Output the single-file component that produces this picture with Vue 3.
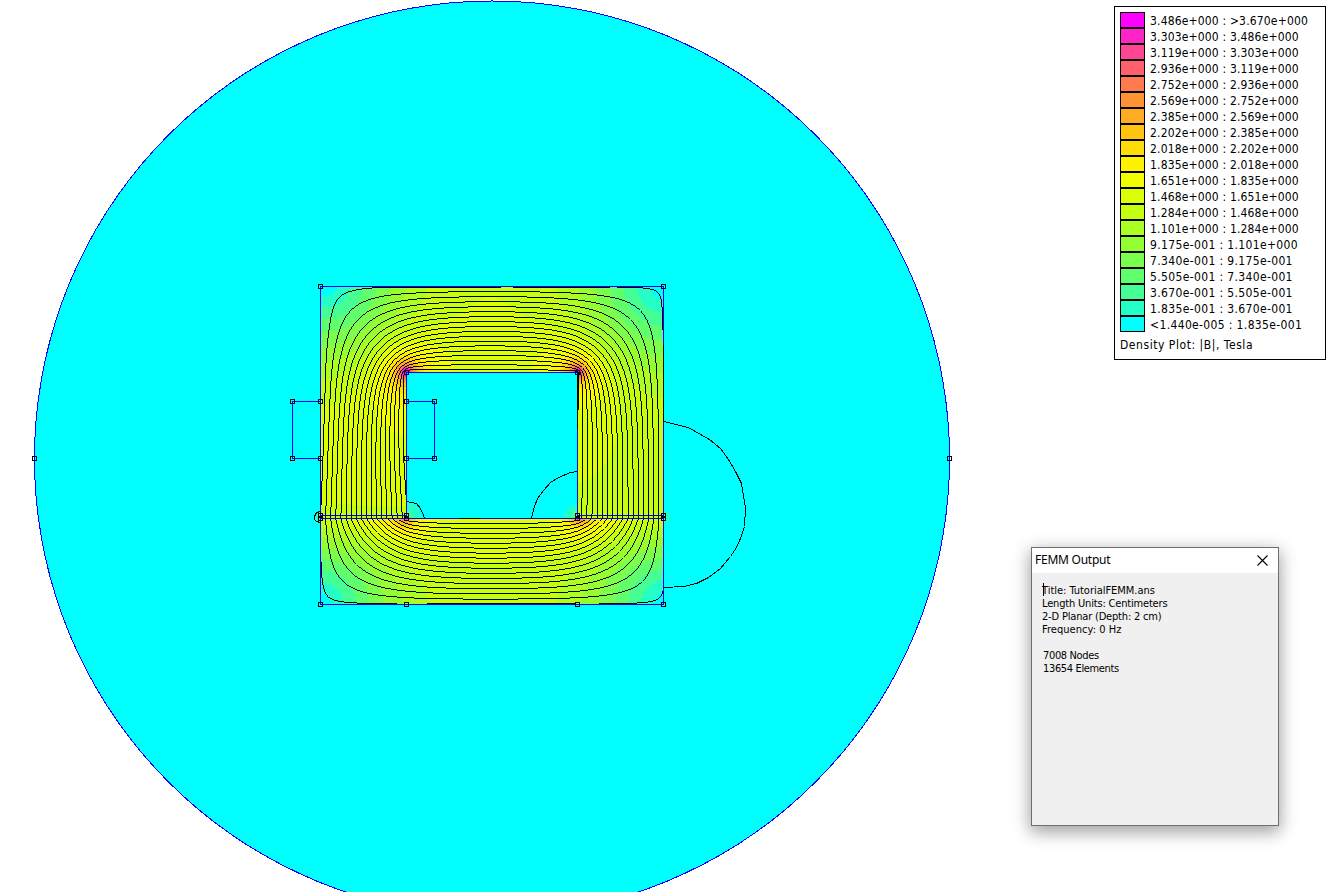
<script setup>
const palette = [
  '#00ffff', '#24ffc8', '#46ff94', '#60ff6c', '#7aff4c', '#93ff33', '#acff22', '#c4ff11', '#dbff07', '#f2ff00',
  '#fff200', '#ffdb07', '#ffc411', '#ffac22', '#ff9333', '#ff7a4c', '#ff606c', '#ff4694', '#ff24c8', '#ff00ff'
]
const ranges = [
  '3.486e+000 : >3.670e+000', '3.303e+000 : 3.486e+000', '3.119e+000 : 3.303e+000', '2.936e+000 : 3.119e+000',
  '2.752e+000 : 2.936e+000', '2.569e+000 : 2.752e+000', '2.385e+000 : 2.569e+000', '2.202e+000 : 2.385e+000',
  '2.018e+000 : 2.202e+000', '1.835e+000 : 2.018e+000', '1.651e+000 : 1.835e+000', '1.468e+000 : 1.651e+000',
  '1.284e+000 : 1.468e+000', '1.101e+000 : 1.284e+000', '9.175e-001 : 1.101e+000', '7.340e-001 : 9.175e-001',
  '5.505e-001 : 7.340e-001', '3.670e-001 : 5.505e-001', '1.835e-001 : 3.670e-001', '<1.440e-005 : 1.835e-001'
]
const legend = ranges.map((label, i) => ({ label, color: palette[19 - i], minus: label.includes('-') }))

// Core geometry in pixels
const L = 320, T = 286, R = 663, B = 604
const IL = 406, IT = 372, IR = 577, G0 = 515, G1 = 518
const W = R - L + 1
const H = B - T + 1
const TESLA = 7.4 // flux density per unit of potential gradient
const at = (x, y) => (y - T) * W + (x - L)

const lerp = (pts, v) => {
  if (v <= pts[0][0]) return pts[0][1]
  for (let k = 1; k < pts.length; k++) {
    if (v <= pts[k][0]) {
      const [a, fa] = pts[k - 1]
      const [b, fb] = pts[k]
      return fa + ((fb - fa) * (v - a)) / (b - a)
    }
  }
  return pts[pts.length - 1][1]
}

// Vector potential on the iron surfaces, in units of one flux line
const outer = {
  left: [[286, 0.6], [320, 0.2], [401, 0.15], [458, 0.5], [510, 0.95], [518, 1.03], [560, 0.96], [604, 0.85]],
  top: [[320, 0.6], [384, 0.93], [500, 0.99], [610, 0.96], [663, 0.93]],
  right: [[286, 0.93], [345, 0.97], [421, 1.01], [518, 1.12], [587, 1.01], [604, 0.9]],
  bottom: [[320, 0.85], [427, 0.96], [577, 0.95], [663, 0.9]]
}
const inner = {
  left: [[372, 19.5], [376, 19.15], [384, 18.95], [401, 18.85], [458, 18.6], [501, 18.01], [518, 17.8]],
  top: [[406, 19.5], [410, 19.1], [420, 18.8], [460, 18.65], [560, 18.6], [572, 18.7], [577, 18.9]],
  right: [[372, 18.9], [376, 18.5], [390, 18.2], [429, 18.02], [471, 17.99], [518, 17.8]],
  bottom: [[406, 17.8], [425, 18], [490, 18.06], [531, 18], [577, 17.8]]
}

function solve() {
  const A = new Float64Array(W * H)
  const kind = new Uint8Array(W * H) // 0 air window, 1 fixed, 2 free
  for (let y = T; y <= B; y++) {
    for (let x = L; x <= R; x++) {
      const n = at(x, y)
      if (x > IL && x < IR && y > IT && y < G1) continue
      kind[n] = 1
      if (x === L) A[n] = lerp(outer.left, y)
      else if (x === R) A[n] = lerp(outer.right, y)
      else if (y === T) A[n] = lerp(outer.top, x)
      else if (y === B) A[n] = lerp(outer.bottom, x)
      else if (y >= G0 && y <= G1 && x <= IL) {
        const o = lerp(outer.left, y)
        A[n] = o + ((lerp(inner.left, y) - o) * (x - L)) / (IL - L)
      } else if (y >= G0 && y <= G1 && x >= IR) {
        const o = lerp(outer.right, y)
        A[n] = o + ((lerp(inner.right, y) - o) * (R - x)) / (R - IR)
      } else if (y === G1) A[n] = lerp(inner.bottom, x)
      else if (y === IT && x >= IL && x <= IR) A[n] = lerp(inner.top, x)
      else if (x === IL && y >= IT && y < G0) A[n] = lerp(inner.left, y)
      else if (x === IR && y >= IT && y < G0) A[n] = lerp(inner.right, y)
      else {
        kind[n] = 2
        A[n] = 1 + (17 * Math.min(x - L, R - x, y - T, B - y, 86)) / 86
      }
    }
  }
  const grad = (n) => {
    const px = kind[n + 1] && (n % W) < W - 1 ? n + 1 : n
    const mx = kind[n - 1] && n % W ? n - 1 : n
    const py = kind[n + W] ? n + W : n
    const my = kind[n - W] ? n - W : n
    return [px > mx ? (A[px] - A[mx]) / (px - mx) : 0, py > my ? (A[py] - A[my]) / ((py - my) / W) : 0]
  }
  const free = []
  for (let n = 0; n < kind.length; n++) if (kind[n] === 2) free.push(n)
  for (let it = 0; it < 400; it++) {
    for (let k = 0; k < free.length; k++) {
      const n = free[k]
      A[n] += 1.93 * ((A[n + 1] + A[n - 1] + A[n + W] + A[n - W]) / 4 - A[n])
    }
  }
  return { A, kind, grad }
}

function render() {
  const { A, kind, grad } = solve()
  const bands = palette.map(() => '')
  let ink = ''
  const dot = (x, y) => `M${x} ${y}h1v1h-1z`
  for (let y = T; y <= B; y++) {
    let start = L
    let current = -1
    for (let x = L; x <= R + 1; x++) {
      let band = -1
      if (x <= R) {
        const n = at(x, y)
        if (kind[n]) {
          const [gx, gy] = grad(n)
          band = Math.min(19, Math.floor((Math.hypot(gx, gy) * TESLA) / 0.1835))
        }
      }
      if (band !== current) {
        if (current >= 0) bands[current] += `M${start} ${y}H${x}v1H${start}z`
        current = band
        start = x
      }
      if (x > R) continue
      const n = at(x, y)
      if (!kind[n]) continue
      const [gx, gy] = grad(n)
      const steep = Math.abs(gx) >= Math.abs(gy)
      const m = steep ? n + 1 : n + W
      const inside = steep ? x < R : y < B
      if (inside && kind[m] && Math.floor(A[n]) !== Math.floor(A[m])) {
        const level = Math.max(Math.floor(A[n]), Math.floor(A[m]))
        if (level > 18) continue
        const t = (level - A[n]) / (A[m] - A[n]) > 0.5 ? 1 : 0
        ink += steep ? dot(x + t, y) : dot(x, y + t)
      }
    }
  }
  return { bands, ink }
}
const field = render()

// Outer region boundary is meshed in 2.5 degree segments
const boundary = Array.from({ length: 144 }, (_, i) => {
  const a = (i * Math.PI) / 72
  return `${(492 + 457.5 * Math.cos(a)).toFixed(1)},${(458.5 + 457.5 * Math.sin(a)).toFixed(1)}`
}).join(' ')

const nodes = [
  [320, 286], [663, 286], [406, 372], [577, 372], [292, 401], [320, 401], [406, 401], [434, 401],
  [292, 458], [320, 458], [406, 458], [434, 458], [320, 515], [406, 515], [577, 515], [663, 515],
  [320, 518], [406, 518], [577, 518], [663, 518], [320, 604], [406, 604], [577, 604], [663, 604],
  [34, 458], [949, 458]
]
</script>

<template>
  <main class="stage">
    <svg class="plot" width="1330" height="892" viewBox="0 0 1330 892" shape-rendering="crispEdges">
      <polygon class="region" :points="boundary" />
      <circle cx="320" cy="518" r="6" :fill="palette[1]" />
      <circle cx="664" cy="517" r="6" :fill="palette[1]" />
      <path d="M407 502h4l7 6 3 10h-14z" :fill="palette[1]" />
      <path d="M577 504q-12 3-13 14h13z" :fill="palette[1]" />
      <path d="M577 510q-6 2-6 8h6z" :fill="palette[2]" />
      <path d="M407 509q6 2 6 9h-6z" :fill="palette[2]" />
      <path v-for="(d, i) in field.bands" :key="i" :d="d" :fill="palette[i]" />
      <path :d="field.ink" />
      <g class="line">
        <path d="M664.5 421.5L672 423.5L688.5 427.5L700.5 434.5L709.5 439.5L720.5 448.5L728.5 459.5L735.5 471.5L741.5 483.5L743.5 495.5L745.5 508.5L744.5 526.5L740.5 538.5L736.5 547.5L730.5 556.5L720.5 568.5L708.5 577.5L696.5 583.5L683.5 586.5L664 587.5" />
        <path d="M577.5 471.5L570.5 472.5L558.5 477.5L550.5 482.5L543.5 490.5L537.5 498.5L534.5 506.5L532.5 513.5L531.5 518.5" />
        <path d="M406.5 501.5L416.5 503.5L420.5 508.5L423.5 515.5L424.5 518.5" />
        <path d="M320.5 511.5L316.5 512.5L314.5 516.5L314.5 519.5L316.5 521.5L320.5 522.5" />
      </g>
      <g class="edge">
        <path d="M320.5 286.5H663.5V604.5H320.5z" />
        <path d="M406.5 515.5V372.5H577.5V515.5M320.5 515.5H406.5V518.5M577.5 518.5V515.5H663.5M320.5 518.5H663.5" />
        <path d="M320.5 401.5H292.5V458.5H320.5M406.5 401.5H434.5V458.5H406.5" />
      </g>
      <path class="skin" d="M384 287.5H501M513 287.5H610M663.5 345V421M577.5 372V429M427 603.5H575M460 518.5H480" />
      <rect v-for="([x, y], i) in nodes" :key="'n' + i" class="node" :x="x - 1.5" :y="y - 1.5" width="4" height="4" />
    </svg>

    <aside class="legend">
      <div v-for="row in legend" :key="row.label" class="row">
        <span class="swatch" :style="{ background: row.color }"></span>
        <span class="label" :class="{ minus: row.minus }">{{ row.label }}</span>
      </div>
      <div class="caption">Density Plot: |B|, Tesla</div>
    </aside>

    <section class="dialog">
      <header class="title">
        <span>FEMM Output</span>
        <svg width="11" height="11" viewBox="0 0 11 11"><path d="M.5.5l10 10M10.5.5l-10 10" /></svg>
      </header>
      <div class="body">
        <div class="first">Title: TutorialFEMM.ans</div>
        <div>Length Units: Centimeters</div>
        <div>2-D Planar (Depth: 2 cm)</div>
        <div class="wide">Frequency: 0 Hz</div>
        <div>&nbsp;</div>
        <div class="count">7008 Nodes</div>
        <div class="count">13654 Elements</div>
      </div>
    </section>
  </main>
</template>

<style>
body { margin: 0; background: #fff; overflow: hidden; }
</style>

<style scoped>
.stage { position: relative; width: 1330px; height: 892px; overflow: hidden; background: #fff; color: #000; }
.plot { display: block; }
.region { fill: #0ff; stroke: #00f; stroke-width: 1; }
.line path, .skin { fill: none; stroke: #000; stroke-width: 1; }
.edge path { fill: none; stroke: #00f; stroke-width: 1; }
.node { fill: none; stroke: #000; stroke-width: 1; }
.legend {
  position: absolute; left: 1114px; top: 6px; width: 212px; height: 354px; box-sizing: border-box;
  border: 1px solid #000; background: #fff; padding: 5px;
  font: 12px/18px "DejaVu Sans Condensed", "DejaVu Sans", sans-serif; font-stretch: condensed;
}
.row { display: flex; height: 16px; gap: 5px; white-space: pre; }
.swatch { width: 25px; height: 16px; box-sizing: border-box; border: 1px solid #000; flex: none; }
.label { letter-spacing: .17px; }
.label.minus { letter-spacing: .36px; }
.caption { margin-top: 4px; white-space: nowrap; letter-spacing: .55px; }
.dialog {
  position: absolute; left: 1031px; top: 547px; width: 248px; height: 279px; box-sizing: border-box;
  border: 1px solid #6f6f6f; background: #f0f0f0;
  box-shadow: 0 5px 16px 1px rgba(0, 0, 0, .38);
}
.title {
  display: flex; align-items: center; justify-content: space-between; height: 25px; padding: 0 10px 0 3px;
  background: #fff; font: 12px/24px "Noto Sans", "Open Sans", sans-serif; letter-spacing: -.25px;
}
.title span { height: 25px; }
.title svg { margin-bottom: 1px; }
.title path { fill: none; stroke: #000; stroke-width: 1.1; }
.body {
  padding: 11px 10px; font: 11px/13px "DejaVu Sans Condensed", "DejaVu Sans", sans-serif; font-stretch: condensed;
  letter-spacing: -.18px; white-space: nowrap;
}
.first { position: relative; letter-spacing: -.03px; }
.wide { letter-spacing: .05px; }
.count { padding-left: 1px; letter-spacing: -.35px; }
.first::before { content: ""; position: absolute; left: 1px; top: -1px; width: 1px; height: 13px; background: #000; }
</style>
